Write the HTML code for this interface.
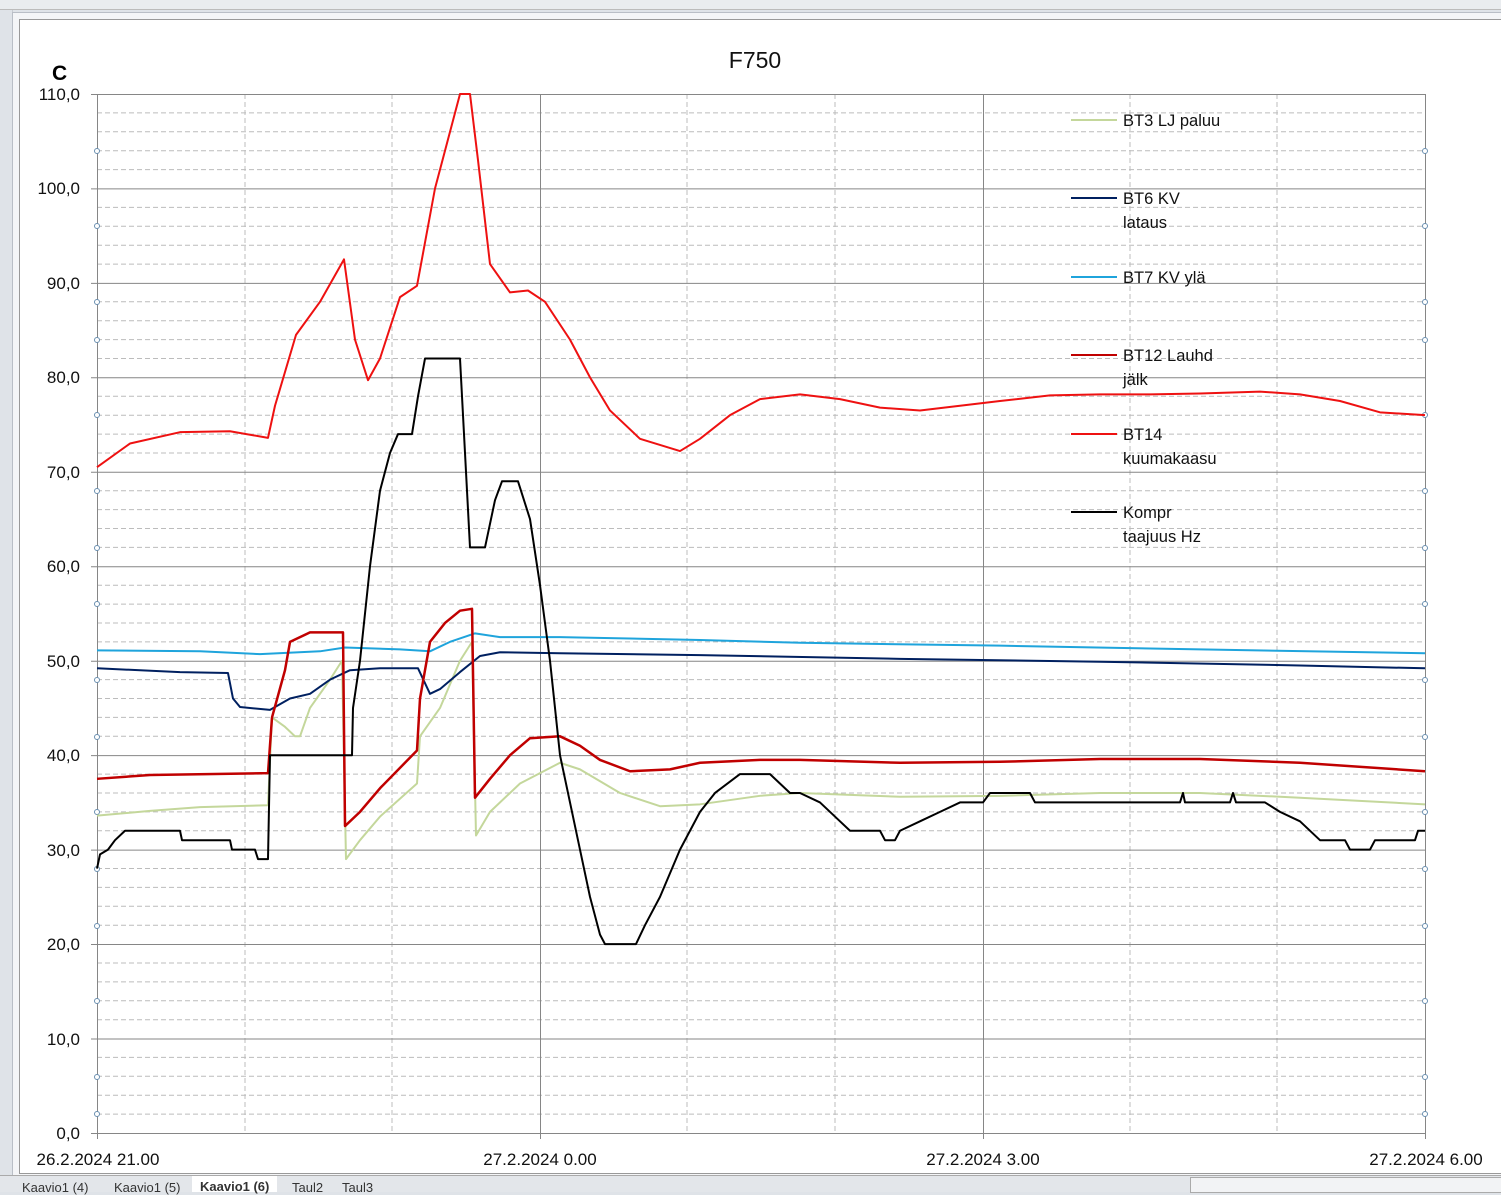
<!DOCTYPE html>
<html><head><meta charset="utf-8"><style>
body{margin:0;width:1501px;height:1191px;overflow:hidden;background:#dfe3e8;font-family:"Liberation Sans",sans-serif;position:relative}
.frame{position:absolute;left:12px;top:12px;width:1495px;height:1162px;background:#f4f5f7;border:1px solid #b9bec6}
.chart{position:absolute;left:19px;top:19px;width:1490px;height:1153px;background:#fff;border-left:1px solid #999;border-top:1px solid #999;border-bottom:1px solid #999}
.tabs{position:absolute;left:0;top:1175px;width:1501px;height:16px;background:#e3e6ea;border-top:1px solid #aaa;font-size:13px;color:#333}
.tabs span{position:absolute;top:4px}
</style></head><body>
<div style="position:absolute;left:0;top:0;width:1501px;height:9px;background:#e9ecef;border-bottom:1px solid #bbb"></div>
<div style="position:absolute;left:0;top:10px;width:12px;height:1165px;background:#dfe3e8;border-right:1px solid #c8ccd2"></div>
<div class="frame"></div>
<div class="chart"></div>
<svg width="1501" height="1191" style="position:absolute;left:0;top:0" font-family="Liberation Sans, sans-serif">
<g stroke="#bcbcbc" stroke-dasharray="5,3" stroke-width="1">
<line x1="97" x2="1425" y1="1114.1" y2="1114.1"/><line x1="97" x2="1425" y1="1095.2" y2="1095.2"/><line x1="97" x2="1425" y1="1076.3" y2="1076.3"/><line x1="97" x2="1425" y1="1057.4" y2="1057.4"/>
<line x1="97" x2="1425" y1="1019.7" y2="1019.7"/><line x1="97" x2="1425" y1="1000.8" y2="1000.8"/><line x1="97" x2="1425" y1="981.9" y2="981.9"/><line x1="97" x2="1425" y1="963" y2="963"/>
<line x1="97" x2="1425" y1="925.2" y2="925.2"/><line x1="97" x2="1425" y1="906.3" y2="906.3"/><line x1="97" x2="1425" y1="887.4" y2="887.4"/><line x1="97" x2="1425" y1="868.5" y2="868.5"/>
<line x1="97" x2="1425" y1="830.8" y2="830.8"/><line x1="97" x2="1425" y1="811.9" y2="811.9"/><line x1="97" x2="1425" y1="793" y2="793"/><line x1="97" x2="1425" y1="774.1" y2="774.1"/>
<line x1="97" x2="1425" y1="736.3" y2="736.3"/><line x1="97" x2="1425" y1="717.4" y2="717.4"/><line x1="97" x2="1425" y1="698.5" y2="698.5"/><line x1="97" x2="1425" y1="679.6" y2="679.6"/>
<line x1="97" x2="1425" y1="641.9" y2="641.9"/><line x1="97" x2="1425" y1="623" y2="623"/><line x1="97" x2="1425" y1="604.1" y2="604.1"/><line x1="97" x2="1425" y1="585.2" y2="585.2"/>
<line x1="97" x2="1425" y1="547.4" y2="547.4"/><line x1="97" x2="1425" y1="528.5" y2="528.5"/><line x1="97" x2="1425" y1="509.6" y2="509.6"/><line x1="97" x2="1425" y1="490.7" y2="490.7"/>
<line x1="97" x2="1425" y1="453" y2="453"/><line x1="97" x2="1425" y1="434.1" y2="434.1"/><line x1="97" x2="1425" y1="415.2" y2="415.2"/><line x1="97" x2="1425" y1="396.3" y2="396.3"/>
<line x1="97" x2="1425" y1="358.5" y2="358.5"/><line x1="97" x2="1425" y1="339.6" y2="339.6"/><line x1="97" x2="1425" y1="320.7" y2="320.7"/><line x1="97" x2="1425" y1="301.8" y2="301.8"/>
<line x1="97" x2="1425" y1="264.1" y2="264.1"/><line x1="97" x2="1425" y1="245.2" y2="245.2"/><line x1="97" x2="1425" y1="226.3" y2="226.3"/><line x1="97" x2="1425" y1="207.4" y2="207.4"/>
<line x1="97" x2="1425" y1="169.6" y2="169.6"/><line x1="97" x2="1425" y1="150.7" y2="150.7"/><line x1="97" x2="1425" y1="131.8" y2="131.8"/><line x1="97" x2="1425" y1="112.9" y2="112.9"/>
<line x1="245" x2="245" y1="94" y2="1133"/><line x1="392" x2="392" y1="94" y2="1133"/><line x1="687" x2="687" y1="94" y2="1133"/><line x1="835" x2="835" y1="94" y2="1133"/><line x1="1130" x2="1130" y1="94" y2="1133"/><line x1="1277" x2="1277" y1="94" y2="1133"/>
</g>
<g stroke="#868686" stroke-width="1">
<line x1="91" x2="1425" y1="94.5" y2="94.5"/><line x1="91" x2="1425" y1="188.9" y2="188.9"/><line x1="91" x2="1425" y1="283.4" y2="283.4"/><line x1="91" x2="1425" y1="377.8" y2="377.8"/><line x1="91" x2="1425" y1="472.3" y2="472.3"/><line x1="91" x2="1425" y1="566.7" y2="566.7"/><line x1="91" x2="1425" y1="661.2" y2="661.2"/><line x1="91" x2="1425" y1="755.6" y2="755.6"/><line x1="91" x2="1425" y1="850.1" y2="850.1"/><line x1="91" x2="1425" y1="944.5" y2="944.5"/><line x1="91" x2="1425" y1="1039" y2="1039"/><line x1="91" x2="1425" y1="1133.5" y2="1133.5"/>
<line x1="97.5" x2="97.5" y1="94" y2="1139"/><line x1="540.5" x2="540.5" y1="94" y2="1139"/><line x1="983.5" x2="983.5" y1="94" y2="1139"/><line x1="1425.5" x2="1425.5" y1="94" y2="1139"/>
</g>
<g fill="#fff" stroke="#6a8fb0" stroke-width="1">
<circle cx="97" cy="151" r="2.5"/><circle cx="97" cy="226" r="2.5"/><circle cx="97" cy="302" r="2.5"/><circle cx="97" cy="340" r="2.5"/><circle cx="97" cy="415" r="2.5"/><circle cx="97" cy="491" r="2.5"/><circle cx="97" cy="548" r="2.5"/><circle cx="97" cy="604" r="2.5"/><circle cx="97" cy="680" r="2.5"/><circle cx="97" cy="737" r="2.5"/><circle cx="97" cy="812" r="2.5"/><circle cx="97" cy="869" r="2.5"/><circle cx="97" cy="926" r="2.5"/><circle cx="97" cy="1001" r="2.5"/><circle cx="97" cy="1077" r="2.5"/><circle cx="97" cy="1114" r="2.5"/>
<circle cx="1425" cy="151" r="2.5"/><circle cx="1425" cy="226" r="2.5"/><circle cx="1425" cy="302" r="2.5"/><circle cx="1425" cy="340" r="2.5"/><circle cx="1425" cy="415" r="2.5"/><circle cx="1425" cy="491" r="2.5"/><circle cx="1425" cy="548" r="2.5"/><circle cx="1425" cy="604" r="2.5"/><circle cx="1425" cy="680" r="2.5"/><circle cx="1425" cy="737" r="2.5"/><circle cx="1425" cy="812" r="2.5"/><circle cx="1425" cy="869" r="2.5"/><circle cx="1425" cy="926" r="2.5"/><circle cx="1425" cy="1001" r="2.5"/><circle cx="1425" cy="1077" r="2.5"/><circle cx="1425" cy="1114" r="2.5"/>
</g>
<g transform="translate(0,1133) scale(1,-9.445)" fill="none" stroke-linejoin="round">
<polyline vector-effect="non-scaling-stroke" stroke="#c4d79b" stroke-width="2" points="97,33.6 150,34.1 200,34.5 268,34.7 272,44 285,43 295,42 300,42 310,45 330,48 342,50 346,29 360,31 380,33.5 417,37 420,42 440,45 460,50 472,52 476,31.5 490,34 520,37 560,39.2 580,38.5 620,36 660,34.6 700,34.8 760,35.7 800,36 900,35.6 1000,35.7 1100,36 1200,36 1300,35.5 1425,34.8"/>
<polyline vector-effect="non-scaling-stroke" stroke="#1fa4dc" stroke-width="2" points="97,51.1 200,51 260,50.7 320,51 345,51.4 400,51.2 430,51 450,52 475,52.9 500,52.5 560,52.5 700,52.2 800,51.9 1000,51.6 1200,51.2 1425,50.8"/>
<polyline vector-effect="non-scaling-stroke" stroke="#002060" stroke-width="2" points="97,49.2 180,48.8 228,48.7 233,46 240,45.1 270,44.8 290,46 310,46.5 330,48 350,49 380,49.2 418,49.2 430,46.5 440,47 460,48.8 480,50.5 500,50.9 560,50.8 700,50.6 900,50.2 1100,49.9 1300,49.5 1425,49.2"/>
<polyline vector-effect="non-scaling-stroke" stroke="#c00000" stroke-width="2.5" points="97,37.5 150,37.9 268,38.1 272,44 285,49 290,52 300,52.5 310,53 343,53 345,32.5 360,34 380,36.5 417,40.5 420,46 430,52 445,54 460,55.3 472,55.5 475,35.5 490,37.5 510,40 530,41.8 560,42 580,41 600,39.5 630,38.3 670,38.5 700,39.2 760,39.5 800,39.5 900,39.2 1000,39.3 1100,39.6 1200,39.6 1300,39.2 1425,38.3"/>
<polyline vector-effect="non-scaling-stroke" stroke="#ee1111" stroke-width="2" points="97,70.5 130,73 180,74.2 230,74.3 268,73.6 275,77 296,84.5 320,88 344,92.5 355,84 368,79.7 380,82 400,88.5 417,89.7 435,100 460,110 470,110 478,103 490,92 510,89 528,89.2 545,88 570,84 590,80 610,76.5 640,73.5 680,72.2 700,73.5 730,76 760,77.7 800,78.2 840,77.7 880,76.8 920,76.5 960,77 1000,77.5 1050,78.1 1100,78.2 1150,78.2 1200,78.3 1260,78.5 1300,78.2 1340,77.5 1380,76.3 1425,76"/>
<polyline vector-effect="non-scaling-stroke" stroke="#000" stroke-width="2" points="97,28 100,29.5 108,30 115,31 125,32 180,32 182,31 230,31 232,30 255,30 258,29 268,29 270,40 352,40 353,45 360,50 370,60 380,68 390,72 398,74 412,74 418,78 425,82 460,82 465,72 470,62 485,62 495,67 502,69 518,69 530,65 540,58 550,50 560,40 570,35 580,30 590,25 600,21 605,20 636,20 645,22 660,25 680,30 700,34 715,36 740,38 770,38 790,36 800,36 820,35 840,33 850,32 880,32 885,31 895,31 900,32 920,33 940,34 960,35 983,35 990,36 1030,36 1035,35 1180,35 1183,36 1185,35 1230,35 1233,36 1236,35 1265,35 1280,34 1300,33 1320,31 1345,31 1350,30 1370,30 1375,31 1415,31 1418,32 1425,32"/>
</g>
<g stroke-width="2">
<line x1="1071" x2="1117" y1="120" y2="120" stroke="#c4d79b"/>
<line x1="1071" x2="1117" y1="198" y2="198" stroke="#002060"/>
<line x1="1071" x2="1117" y1="277" y2="277" stroke="#1fa4dc"/>
<line x1="1071" x2="1117" y1="355" y2="355" stroke="#c00000"/>
<line x1="1071" x2="1117" y1="434" y2="434" stroke="#ee1111"/>
<line x1="1071" x2="1117" y1="512" y2="512" stroke="#000"/>
</g>
<g font-size="16.5" fill="#111">
<text x="1123" y="126">BT3 LJ paluu</text>
<text x="1123" y="204">BT6 KV</text><text x="1123" y="228">lataus</text>
<text x="1123" y="283">BT7 KV ylä</text>
<text x="1123" y="361">BT12 Lauhd</text><text x="1123" y="385">jälk</text>
<text x="1123" y="440">BT14</text><text x="1123" y="464">kuumakaasu</text>
<text x="1123" y="518">Kompr</text><text x="1123" y="542">taajuus Hz</text>
</g>
<text x="755" y="68" font-size="23" text-anchor="middle" fill="#111">F750</text>
<text x="52" y="80" font-size="21" font-weight="bold" fill="#000">C</text>
<g font-size="17" fill="#111" text-anchor="end">
<text x="80" y="100">110,0</text><text x="80" y="194">100,0</text><text x="80" y="289">90,0</text><text x="80" y="383">80,0</text><text x="80" y="478">70,0</text><text x="80" y="572">60,0</text><text x="80" y="667">50,0</text><text x="80" y="761">40,0</text><text x="80" y="856">30,0</text><text x="80" y="950">20,0</text><text x="80" y="1045">10,0</text><text x="80" y="1139">0,0</text>
</g>
<g font-size="17" fill="#111" text-anchor="middle">
<text x="98" y="1165">26.2.2024 21.00</text><text x="540" y="1165">27.2.2024 0.00</text><text x="983" y="1165">27.2.2024 3.00</text><text x="1426" y="1165">27.2.2024 6.00</text>
</g>
</svg>
<div class="tabs">
<span style="left:22px">Kaavio1 (4)</span><span style="left:114px">Kaavio1 (5)</span>
<span style="left:192px;top:0;height:16px;background:#fff;padding:3px 8px 0;font-weight:bold;box-sizing:border-box">Kaavio1 (6)</span>
<span style="left:292px">Taul2</span><span style="left:342px">Taul3</span>
<span style="left:1190px;top:1px;width:311px;height:14px;background:#f2f3f5;border:1px solid #aaa"></span>
</div>
</body></html>
